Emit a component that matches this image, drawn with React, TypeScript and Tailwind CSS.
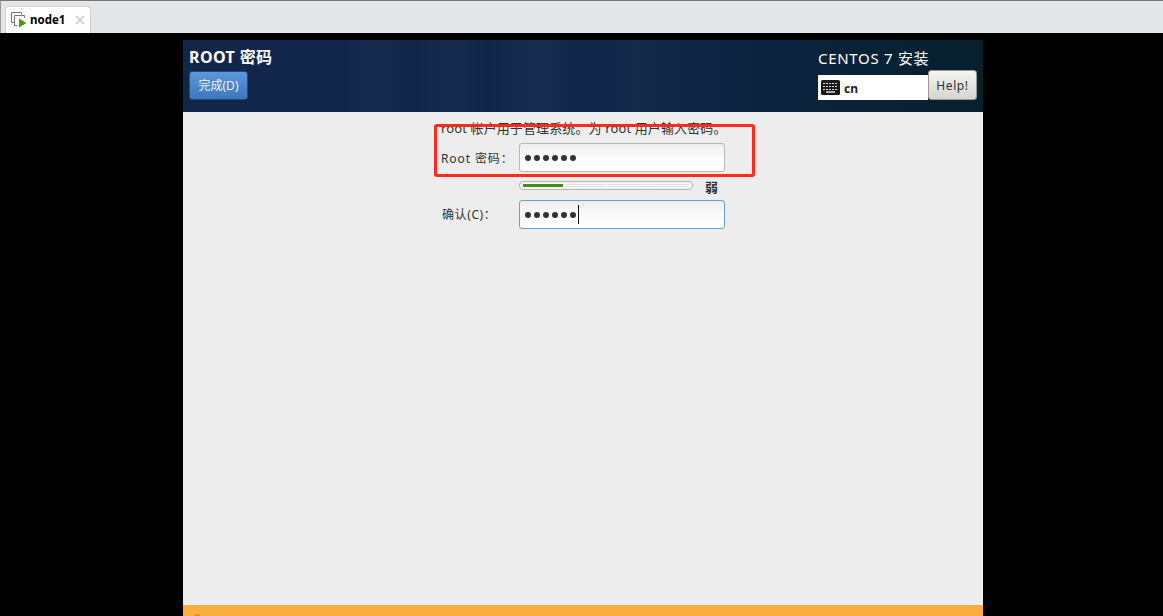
import React from "react";

const sans = "font-['Noto_Sans','Noto_Sans_CJK_SC',sans-serif]";

function Dots({ caret }: { caret?: boolean }) {
  return (
    <div className="flex items-center gap-[3px]">
      {[0, 1, 2, 3, 4, 5].map((i) => (
        <span key={i} className="w-[6px] h-[6px] rounded-full bg-[#2e3436]" />
      ))}
      {caret && <span className="w-px h-[19px] bg-[#111] -ml-[1px]" />}
    </div>
  );
}

function Field({ focus, caret }: { focus?: boolean; caret?: boolean }) {
  return (
    <div
      className={`w-[206px] h-[29px] rounded-[3px] border flex items-center pl-[5px] bg-gradient-to-b from-[#eeeeec] via-[#fbfbfb] to-white ${
        focus ? "border-[#6c9fd8]" : "border-[#b8b8b4]"
      }`}
    >
      <Dots caret={caret} />
    </div>
  );
}

export default function App() {
  return (
    <div className={`w-[1163px] h-[616px] overflow-hidden flex flex-col bg-black ${sans}`}>
      <div className="h-[33px] shrink-0 bg-[#e4e5e7] border-t border-t-[#777] border-l border-l-[#999] flex items-end pl-[4px]">
        <div className="w-[86px] h-[27px] bg-white rounded-t-[4px] border border-b-0 border-[#d0d0d0] flex items-center pl-[5px]">
          <svg width="16" height="16" viewBox="0 0 16 16" className="shrink-0">
            <path d="M3.5 10.5H0.5V0.5H10.5V2.5" fill="none" stroke="#777" strokeWidth="1" />
            <path d="M6.5 13.5H3.5V3.5H13.5V6" fill="none" stroke="#777" strokeWidth="1" />
            <path d="M8 6.5L15.5 11L8 15.5Z" fill="#4d9a16" />
          </svg>
          <span className="ml-[3px] text-[11.5px] font-bold text-black font-['Noto_Sans',sans-serif] leading-none">node1</span>
          <svg width="10" height="10" viewBox="0 0 10 10" className="ml-[10px]">
            <path d="M1 1L9 9M9 1L1 9" stroke="#c8c8c8" strokeWidth="1.6" />
          </svg>
        </div>
      </div>

      <div className="flex-1 flex justify-center pt-[7px] pl-[3px]">
        <div className="w-[800px] flex flex-col bg-[#ededed]">
          <header className="h-[72px] shrink-0 flex justify-between bg-[linear-gradient(90deg,rgba(0,0,0,0)_20%,rgba(255,255,255,0.015)_24%,rgba(0,0,0,0.04)_29%,rgba(255,255,255,0.02)_33%,rgba(0,0,0,0.03)_38%,rgba(255,255,255,0.025)_44%,rgba(0,0,0,0.03)_50%,rgba(255,255,255,0.015)_57%,rgba(0,0,0,0)_66%),linear-gradient(90deg,#12264a,#11284c_50%,#0c2340_72%,#06202c)] pl-[6px] pr-[6px]">
            <div className="flex flex-col pt-[7px]">
              <div className="text-[16px] leading-[21px] tracking-[0.4px] font-bold text-white">ROOT 密码</div>
              <button className="mt-[3px] w-[59px] h-[29px] rounded-[3px] border border-[#1e4a85] bg-gradient-to-b from-[#5c98d8] to-[#3d77bd] text-[12px] text-[#eef4fb] flex items-center justify-center">
                完成(D)
              </button>
            </div>
            <div className="flex flex-col items-start pt-[8px] w-[159px]">
              <div className="text-[15px] leading-[20px] tracking-[0.7px] text-white">CENTOS 7 安装</div>
              <div className="flex items-start relative mt-[1px]">
                <div className="w-[110px] h-[25px] mt-[6px] bg-white flex items-center pl-[3px]">
                  <svg width="19" height="15" viewBox="0 0 19 15" className="shrink-0">
                    <rect x="0" y="0" width="19" height="15" rx="1.5" fill="#1a1a1a" />
                    <path d="M2 3.5H17M2 6.5H17M2 9.5H17" stroke="#ddd" strokeWidth="1" strokeDasharray="2 1" />
                    <path d="M5 12H14" stroke="#ddd" strokeWidth="1.5" />
                  </svg>
                  <span className="ml-[4px] mt-[2px] text-[12px] font-bold text-[#222] leading-none">cn</span>
                </div>
                <button className="w-[49px] h-[30px] mt-[1px] pt-[1px] rounded-[3px] border border-[#9a9a96] bg-gradient-to-b from-[#f4f4f2] to-[#d4d4d0] text-[12px] text-[#2e3436] flex items-center justify-center tracking-[0.6px]">
                  Help!
                </button>
              </div>
            </div>
          </header>

          <main className="flex-1 flex flex-col pl-[258px] text-[#2e3436]">
            <p className="mt-[8px] text-[13px] leading-[16px] tracking-[0.12px] whitespace-nowrap">root 帐户用于管理系统。为 root 用户输入密码。</p>
            <div className="mt-[7px] flex items-center">
              <label className="w-[78px] pt-[2px] text-[12px] tracking-[0.9px] whitespace-nowrap">Root 密码：</label>
              <Field />
            </div>
            <div className="mt-[8px] h-[14px] flex items-start ml-[78px]">
              <div className="mt-[1px] w-[174px] h-[9px] rounded-[4px] border border-[#b4b4b0] bg-[#f4f4f4] flex items-center px-[3px] gap-[2px]">
                <div className="h-[3px] flex-1 bg-[#4a8a12]" />
                <div className="h-[3px] flex-1 bg-white border-y border-[#e4e4e4]" />
                <div className="h-[3px] flex-1 bg-white border-y border-[#e4e4e4]" />
                <div className="h-[3px] flex-1 bg-white border-y border-[#e4e4e4]" />
              </div>
              <span className="ml-[12px] text-[13px] leading-[14px] font-bold">弱</span>
            </div>
            <div className="mt-[6px] flex items-center">
              <label className="w-[78px] pl-[1px] pt-[1px] text-[12px] tracking-[0.6px] whitespace-nowrap">确认(C)：</label>
              <Field focus caret />
            </div>
            <div className="flex-1" />
          </main>

          <div className="h-[11px] shrink-0 bg-[#fbae40] relative overflow-hidden">
            <span className="absolute left-[10px] top-[9px] w-[8px] h-[8px] rounded-full bg-[#f08a24]" />
          </div>
        </div>
      </div>

      <div className="absolute left-[434px] top-[124px] w-[321px] h-[53px] border-[3px] border-[#fe2a1a] rounded-[3px] pointer-events-none" />
    </div>
  );
}
